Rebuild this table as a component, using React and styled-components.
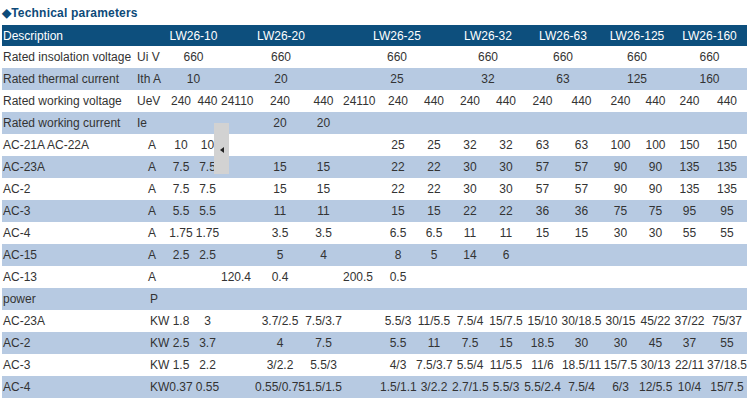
import React from "react";
import styled, { createGlobalStyle } from "styled-components";

/* ========== DATA ========== */

// [first grid column, span] of each model group
const MODEL_SPANS = [
  [3, 2],
  [5, 3],
  [8, 3],
  [11, 2],
  [13, 2],
  [15, 2],
  [17, 2],
];

const spanned = (values) =>
  values.map((text, i) => ({ col: MODEL_SPANS[i][0], span: MODEL_SPANS[i][1], text }));

// grid columns holding the two values of each model
const PLAIN_COLS = [3, 4, 6, 7, 9, 10, 11, 12, 13, 14, 15, 16, 17, 18];
const plain = (values) =>
  values.map((text, i) => ({ col: PLAIN_COLS[i], span: 1, text })).filter((c) => c.text);

const ROWS = [
  {
    label: "Rated insolation voltage",
    unit: "Ui V",
    cells: spanned(["660", "660", "660", "660", "660", "660", "660"]),
  },
  {
    label: "Rated thermal current",
    unit: "Ith A",
    cells: spanned(["10", "20", "25", "32", "63", "125", "160"]),
  },
  {
    label: "Rated working voltage",
    unit: "UeV",
    cells: [
      { col: 3, text: "240" },
      { col: 4, text: "440" },
      { col: 5, text: "24110", left: true },
      { col: 6, text: "240" },
      { col: 7, text: "440" },
      { col: 8, text: "24110", left: true },
      ...plain(["", "", "", "", "240", "440", "240", "440", "240", "440", "240", "440", "240", "440"]),
    ],
  },
  {
    label: "Rated working current",
    unit: "Ie",
    cells: plain(["", "", "20", "20"]),
  },
  {
    label: "AC-21A  AC-22A",
    unit: "A",
    indent: 13,
    cells: plain(["10", "10", "", "", "25", "25", "32", "32", "63", "63", "100", "100", "150", "150"]),
  },
  {
    label: "AC-23A",
    unit: "A",
    indent: 13,
    cells: plain(["7.5", "7.5", "15", "15", "22", "22", "30", "30", "57", "57", "90", "90", "135", "135"]),
  },
  {
    label: "AC-2",
    unit: "A",
    indent: 13,
    cells: plain(["7.5", "7.5", "15", "15", "22", "22", "30", "30", "57", "57", "90", "90", "135", "135"]),
  },
  {
    label: "AC-3",
    unit: "A",
    indent: 13,
    cells: plain(["5.5", "5.5", "11", "11", "15", "15", "22", "22", "36", "36", "75", "75", "95", "95"]),
  },
  {
    label: "AC-4",
    unit: "A",
    indent: 13,
    cells: plain(["1.75", "1.75", "3.5", "3.5", "6.5", "6.5", "11", "11", "15", "15", "30", "30", "55", "55"]),
  },
  {
    label: "AC-15",
    unit: "A",
    indent: 13,
    cells: plain(["2.5", "2.5", "5", "4", "8", "5", "14", "6"]),
  },
  {
    label: "AC-13",
    unit: "A",
    indent: 13,
    cells: [
      { col: 5, text: "120.4", left: true },
      { col: 6, text: "0.4" },
      { col: 8, text: "200.5", left: true },
      { col: 9, text: "0.5" },
    ],
  },
  { label: "power", unit: "P", indent: 15, cells: [] },
  {
    label: "AC-23A",
    unit: "KW",
    indent: 15,
    cells: plain([
      "1.8", "3", "3.7/2.5", "7.5/3.7", "5.5/3", "11/5.5", "7.5/4", "15/7.5",
      "15/10", "30/18.5", "30/15", "45/22", "37/22", "75/37",
    ]),
  },
  {
    label: "AC-2",
    unit: "KW",
    indent: 15,
    cells: plain(["2.5", "3.7", "4", "7.5", "5.5", "11", "7.5", "15", "18.5", "30", "30", "45", "37", "55"]),
  },
  {
    label: "AC-3",
    unit: "KW",
    indent: 15,
    cells: plain([
      "1.5", "2.2", "3/2.2", "5.5/3", "4/3", "7.5/3.7", "5.5/4", "11/5.5",
      "11/6", "18.5/11", "15/7.5", "30/13", "22/11", "37/18.5",
    ]),
  },
  {
    label: "AC-4",
    unit: "KW",
    indent: 15,
    cells: plain([
      "0.37", "0.55", "0.55/0.75", "1.5/1.5", "1.5/1.1", "3/2.2", "2.7/1.5", "5.5/3",
      "5.5/2.4", "7.5/4", "6/3", "12/5.5", "10/4", "15/7.5",
    ]),
  },
];

const MODELS = ["LW26-10", "LW26-20", "LW26-25", "LW26-32", "LW26-63", "LW26-125", "LW26-160"];

/* ========== STYLES ========== */

const GlobalStyle = createGlobalStyle`
  body {
    margin: 0;
    background: #ffffff;
    font-family: "Liberation Sans", Arial, sans-serif;
  }
`;

const COLUMNS =
  "133px 32px 28px 25px 35px 50px 37px 38px 36px 36px 36px 36px 37px 41px 37px 33px 35px 40px";

const Page = styled.div`
  position: relative;
  width: 756px;
  height: 406px;
  padding: 0 2px;
  box-sizing: border-box;
  overflow: hidden;
`;

const Title = styled.h3`
  margin: 0;
  height: 25px;
  display: flex;
  align-items: center;
  font-size: 12px;
  font-weight: bold;
  letter-spacing: 0.2px;
  color: #0d4a79;
`;

const Table = styled.div`
  display: flex;
  flex-direction: column;
  width: 745px;
`;

const Row = styled.div`
  display: grid;
  grid-template-columns: ${COLUMNS};
  align-items: center;
  height: ${({ $head }) => ($head ? "21px" : "22px")};
  background: ${({ $head, $shade }) => ($head ? "#0d4f7d" : $shade ? "#b7cae2" : "#ffffff")};
  color: ${({ $head }) => ($head ? "#ffffff" : "#333333")};
  font-size: 12px;
`;

const Cell = styled.div`
  grid-column: ${({ $col, $span }) => `${$col} / span ${$span || 1}`};
  text-align: ${({ $left }) => ($left ? "left" : "center")};
  padding-left: ${({ $left }) => ($left ? "1px" : "0")};
  white-space: nowrap;
  overflow: visible;
`;

const Label = styled(Cell)`
  text-align: left;
  padding-left: 1px;
`;

const Unit = styled(Cell)`
  text-align: left;
  padding-left: ${({ $indent }) => $indent || 2}px;
`;

/* grey collapsed side tab lying over the table */
const SideTab = styled.div`
  position: absolute;
  left: 214px;
  top: 123px;
  width: 15px;
  height: 51px;
  background: #d2d2d2;
  display: flex;
  align-items: center;
  justify-content: center;

  &::before {
    content: "";
    border-style: solid;
    border-width: 3px 4px 3px 0;
    border-color: transparent #222 transparent transparent;
    margin-top: 3px;
  }
`;

/* ========== COMPONENT ========== */

const App = () => (
  <Page>
    <GlobalStyle />
    <Title>◆Technical parameters</Title>
    <Table>
      <Row $head>
        <Label $col={1}>Description</Label>
        {MODELS.map((m, i) => (
          <Cell key={m} $col={MODEL_SPANS[i][0]} $span={MODEL_SPANS[i][1]}>
            {m}
          </Cell>
        ))}
      </Row>
      {ROWS.map((row, r) => (
        <Row key={r} $shade={r % 2 === 1}>
          <Label $col={1}>{row.label}</Label>
          <Unit $col={2} $indent={row.indent}>
            {row.unit}
          </Unit>
          {row.cells.map((c, i) => (
            <Cell key={i} $col={c.col} $span={c.span} $left={c.left}>
              {c.text}
            </Cell>
          ))}
        </Row>
      ))}
    </Table>
    <SideTab />
  </Page>
);

export default App;
